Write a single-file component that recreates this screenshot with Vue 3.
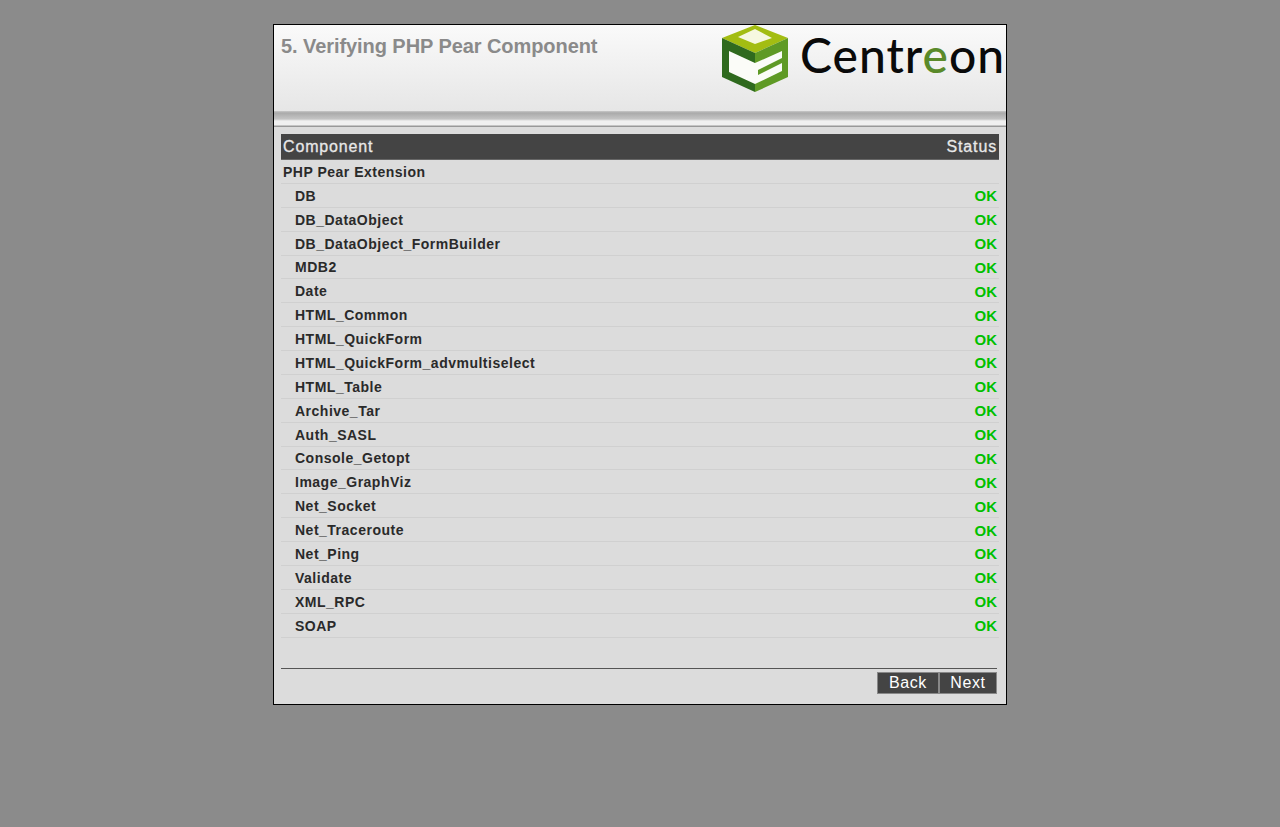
<template>
  <div class="page">
    <div class="box">
      <header class="head">
        <h1 class="title">5. Verifying PHP Pear Component</h1>
        <div class="logo">
          <svg class="cube" width="67" height="68" viewBox="0 0 67 68">
            <polygon points="33,0 66,13 33,28 0,13" fill="#a3bd12" />
            <polygon points="33,4 50,13 33,19 16,12" fill="#f6f8e0" />
            <polygon points="0,13 33,28 33,67 0,52" fill="#2f6a1e" />
            <polygon points="66,13 33,28 33,67 66,52" fill="#5f9a25" />
            <polygon points="7,26 33,38 60,26 60,46 33,59 7,47" fill="#fbfcf8" />
            <polygon points="36,45 60,33 60,38 36,50" fill="#5f9a25" />
          </svg>
          <span class="logo-text">Centr<span class="logo-e">e</span>on</span>
        </div>
      </header>
      <div class="band"></div>
      <main class="content">
        <table class="list">
          <thead>
            <tr>
              <th class="left">Component</th>
              <th class="right">Status</th>
            </tr>
          </thead>
          <tbody>
            <tr>
              <td class="group" colspan="2">PHP Pear Extension</td>
            </tr>
            <tr v-for="item in components" :key="item">
              <td class="name">{{ item }}</td>
              <td class="ok">OK</td>
            </tr>
          </tbody>
        </table>
        <div class="foot">
          <button class="btn back">Back</button>
          <button class="btn">Next</button>
        </div>
      </main>
    </div>
  </div>
</template>

<script setup>
const components = [
  'DB',
  'DB_DataObject',
  'DB_DataObject_FormBuilder',
  'MDB2',
  'Date',
  'HTML_Common',
  'HTML_QuickForm',
  'HTML_QuickForm_advmultiselect',
  'HTML_Table',
  'Archive_Tar',
  'Auth_SASL',
  'Console_Getopt',
  'Image_GraphViz',
  'Net_Socket',
  'Net_Traceroute',
  'Net_Ping',
  'Validate',
  'XML_RPC',
  'SOAP',
]
</script>

<style>
body {
  background: #8b8b8b;
}
</style>

<style scoped>
.page {
  padding-top: 24px;
  font-family: "Liberation Sans", Arial, sans-serif;
}

.box {
  width: 732px;
  height: 679px;
  margin: 0 auto;
  border: 1px solid #000;
  background: #dcdcdc;
}

.head {
  display: flex;
  justify-content: space-between;
  height: 86px;
  background: linear-gradient(#fafafa, #e6e6e6);
  overflow: hidden;
}

.title {
  margin: 10px 0 0 7px;
  font-size: 20px;
  line-height: 22px;
  font-weight: bold;
  letter-spacing: -0.07px;
  color: #8a8a8a;
}

.logo {
  display: flex;
  align-items: flex-start;
  width: 284px;
  flex-shrink: 0;
}

.cube {
  flex-shrink: 0;
}

.logo-text {
  margin-left: 11px;
  font-family: Lato, sans-serif;
  font-size: 48px;
  line-height: 60px;
  font-weight: 500;
  letter-spacing: 1px;
  white-space: nowrap;
  color: #0a0a0a;
}

.logo-e {
  color: #5a8a2a;
}

.band {
  height: 16px;
  background: linear-gradient(#c8c8c8 0, #aaa 2px, #c4c4c4 8px, #f0f0f0 10px, #f0f0f0 14px, #999 15px, #999 16px);
}

.content {
  padding: 7px 7px 0;
}

.list {
  width: 718px;
  border-collapse: collapse;
  table-layout: fixed;
}

.list th {
  height: 25px;
  padding: 0 2px;
  background: #444;
  color: #e8e8e8;
  font-size: 16px;
  font-weight: normal;
  letter-spacing: 0.85px;
  -webkit-text-stroke: 0.3px #e8e8e8;
  border-bottom: 1px solid #666;
}

.left {
  text-align: left;
}

.right {
  text-align: right;
  width: 120px;
}

.list td {
  height: 21.88px;
  padding: 1px 2px 0;
  border-bottom: 1px solid #d0d0d0;
  font-size: 14px;
  font-weight: bold;
  letter-spacing: 0.5px;
  color: #2a2a2a;
}

.list td.name {
  padding-left: 14px;
}

.list td.ok {
  text-align: right;
  color: #00c000;
  font-size: 15px;
  letter-spacing: 0;
}

.foot {
  display: flex;
  justify-content: flex-end;
  margin-top: 30px;
  width: 716px;
  border-top: 1px solid #555;
  padding-top: 3px;
}

.btn {
  width: 58px;
  height: 22px;
  padding: 0;
  border: 1px solid #888;
  background: #444;
  color: #fff;
  font-family: "Liberation Sans", Arial, sans-serif;
  font-size: 16px;
  letter-spacing: 0.6px;
}

.back {
  width: 62px;
}
</style>
